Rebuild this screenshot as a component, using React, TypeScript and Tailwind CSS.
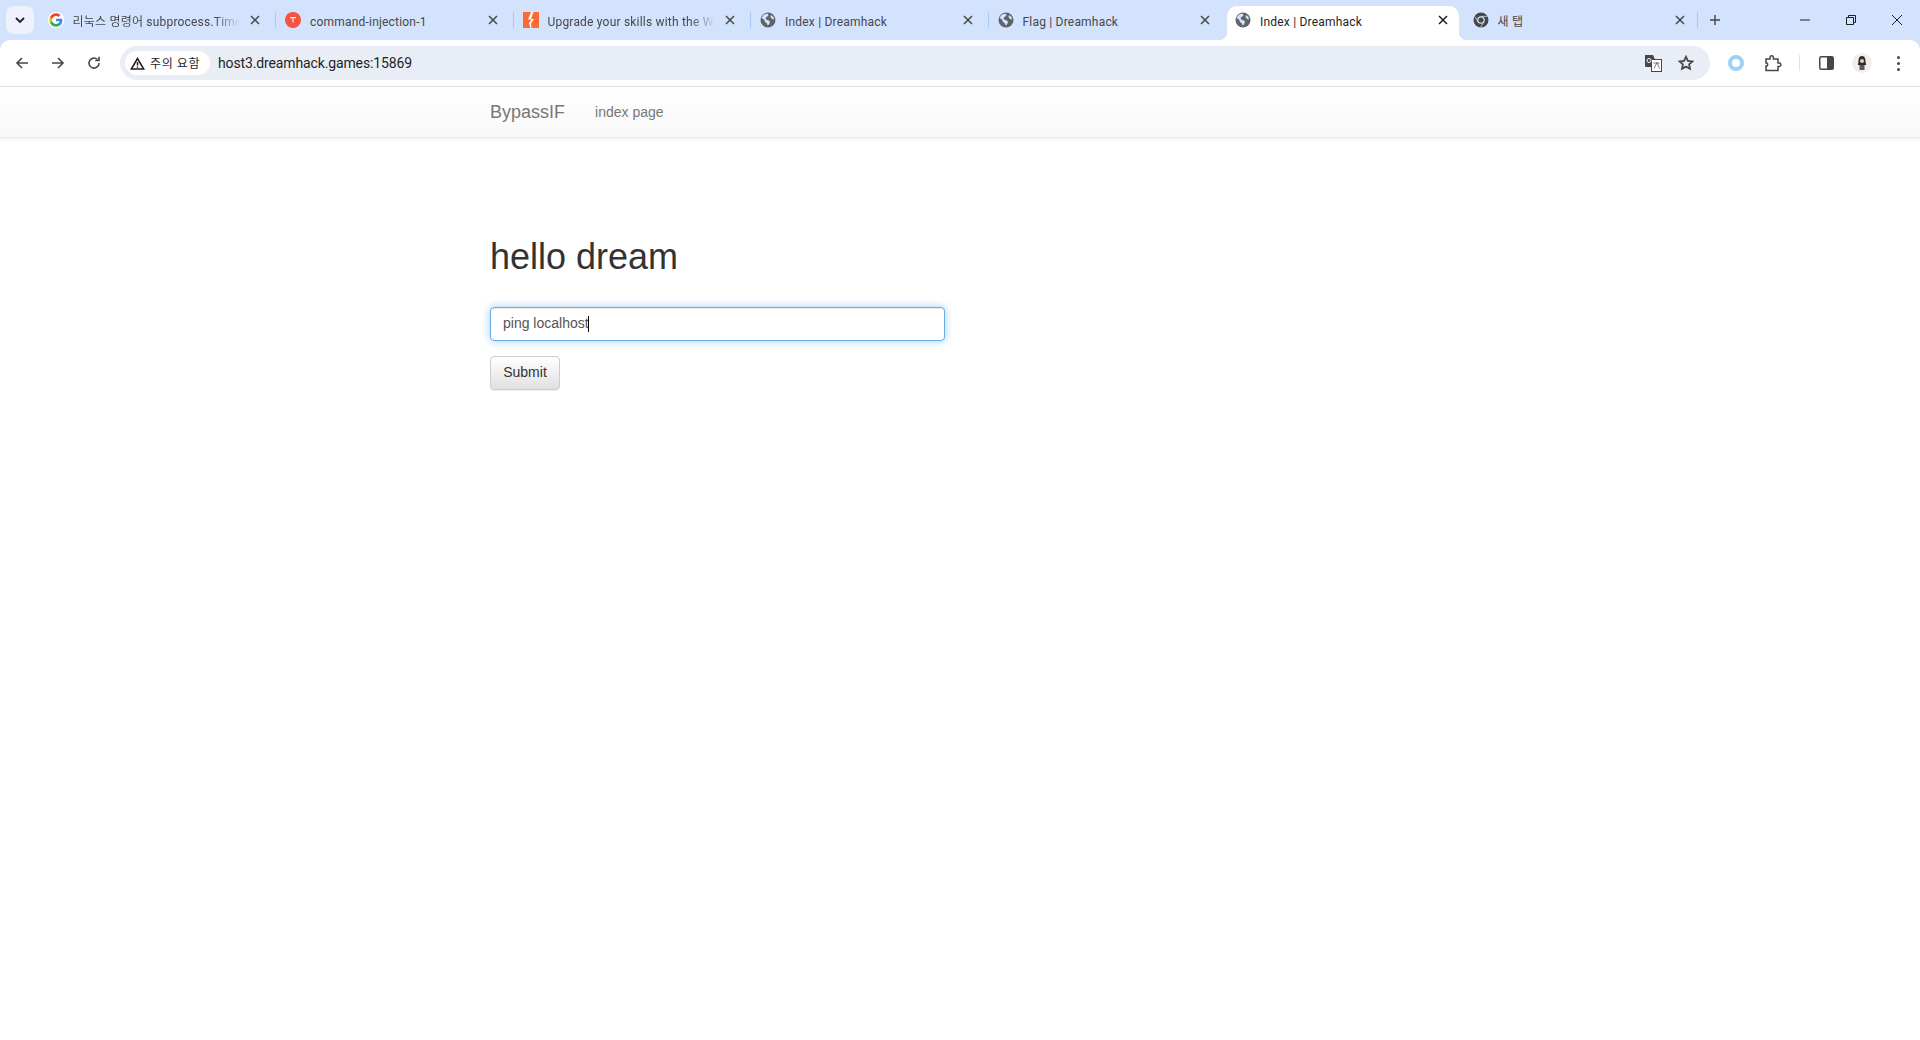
import React from "react";

function Close({ dark }: { dark?: boolean }) {
  return (
    <svg width="10" height="10" viewBox="0 0 10 10" className="shrink-0" fill="none" stroke={dark ? "#1f1f1f" : "#474747"} strokeWidth="1.5">
      <path d="M1 1l8 8M9 1l-8 8" />
    </svg>
  );
}

function Globe() {
  return (
    <svg width="16" height="16" viewBox="0 0 16 16" className="shrink-0">
      <circle cx="8" cy="8" r="7.5" fill="#5f6368" />
      <path d="M3 3.500c1.500-1.600 4-2 5-1.500l.5 1.500-2 1.500-1 1.500 1.500 1.500 2 .5 1 1.500-1 2.500-1.500 1-.5-2-2-1.500-1-2.500L1.500 6z M11 3l2.500 2 .5 2.500-2-.5-1.500-2z" fill="#d3e3fd" />
    </svg>
  );
}

function GoogleG() {
  return (
    <svg width="16" height="16" viewBox="0 0 48 48" className="shrink-0">
      <circle cx="24" cy="24" r="24" fill="#fff" />
      <path fill="#4285F4" d="M43 24.500c0-1.400-.1-2.700-.4-4H24v7.600h10.900c-.5 2.500-1.900 4.600-4 6v5h6.400C41 35.600 43 30.500 43 24.500z" />
      <path fill="#34A853" d="M24 44c5.400 0 9.900-1.800 13.300-4.900l-6.400-5c-1.800 1.200-4.100 1.900-6.900 1.900-5.200 0-9.700-3.500-11.300-8.300H6v5.100C9.300 39.500 16.100 44 24 44z" />
      <path fill="#FBBC05" d="M12.700 27.700c-.4-1.200-.6-2.500-.6-3.700s.2-2.500.6-3.700v-5.100H6C4.700 17.900 4 20.900 4 24s.7 6.100 2 8.800z" />
      <path fill="#EA4335" d="M24 11.900c2.900 0 5.600 1 7.700 3l5.700-5.700C33.900 6 29.400 4 24 4 16.100 4 9.300 8.500 6 15.200l6.700 5.100c1.600-4.900 6.100-8.400 11.300-8.400z" />
    </svg>
  );
}

function Tistory() {
  return (
    <svg width="16" height="16" viewBox="0 0 16 16" className="shrink-0">
      <circle cx="8" cy="8" r="8" fill="#f5533d" />
      <rect x="5" y="5" width="6" height="1.300" fill="#fff" opacity="0.85" />
      <rect x="7.400" y="5" width="1.200" height="5.500" fill="#fff" opacity="0.85" />
    </svg>
  );
}

function Bolt() {
  return (
    <svg width="16" height="16" viewBox="0 0 16 16" className="shrink-0">
      <rect width="16" height="16" fill="#fb6a33" />
      <path d="M8 0L5 7.500h3.500L6 11l1.500 5h1L8 11.500 11 7H8l2.500-7z" fill="#fff" />
    </svg>
  );
}

function Chrome() {
  return (
    <svg width="16" height="16" viewBox="0 0 16 16" className="shrink-0">
      <circle cx="8" cy="8" r="7.500" fill="#474747" />
      <circle cx="8" cy="8" r="3.800" fill="#d3e3fd" />
      <circle cx="8" cy="8" r="2.600" fill="#474747" />
      <path d="M8 4.400h6.500M5 10l-3-5.500M10.800 10.200l-3.500 5.500" stroke="#d3e3fd" strokeWidth="0.7" />
    </svg>
  );
}

type T = { icon: React.ReactNode; title: string; active?: boolean; fade?: boolean; sep?: "mid" | "last" };

const tabs: T[] = [
  { icon: <GoogleG />, title: "리눅스 명령어 subprocess.TimeoutExpired", fade: true, sep: "mid" },
  { icon: <Tistory />, title: "command-injection-1", sep: "mid" },
  { icon: <Bolt />, title: "Upgrade your skills with the Web Hacking", fade: true, sep: "mid" },
  { icon: <Globe />, title: "Index | Dreamhack", sep: "mid" },
  { icon: <Globe />, title: "Flag | Dreamhack" },
  { icon: <Globe />, title: "Index | Dreamhack", active: true },
  { icon: <Chrome />, title: "새 탭", sep: "last" },
];

function Tab({ t }: { t: T }) {
  return (
    <div className="relative h-[34px] w-[237.500px] shrink-0">
      <div className={`relative ml-[2.500px] flex h-[34px] w-[231.500px] items-center pb-[6px] pl-[8px] pr-[8px] ${t.active ? "rounded-t-[10px] bg-white" : ""}`}>
        {t.active && (
          <>
            <span className="absolute bottom-0 left-[-8px] h-2 w-2 bg-[radial-gradient(circle_at_0_0,transparent_8px,#ffffff_8.500px)]" />
            <span className="absolute bottom-0 right-[-8px] h-2 w-2 bg-[radial-gradient(circle_at_100%_0,transparent_8px,#ffffff_8.500px)]" />
          </>
        )}
        {t.icon}
        <span
          className={`ml-[9px] mt-[3px] min-w-0 flex-1 overflow-hidden whitespace-nowrap text-[12px] leading-[16px] tracking-[0.2px] ${t.active ? "text-[#1f1f1f]" : "text-[#474747]"} ${t.fade ? "[mask-image:linear-gradient(to_right,black_85%,transparent)]" : ""}`}
        >
          {t.title}
        </span>
        <span className="ml-[7px] flex w-4 items-center justify-center"><Close dark={t.active} /></span>
      </div>
      {t.sep === "mid" && <span className="absolute right-[-1.500px] top-[6px] h-[16px] w-px bg-[#a8c7fa]" />}
      {t.sep === "last" && <span className="absolute right-[1.500px] top-[6px] h-[16px] w-px bg-[#a8c7fa]" />}
    </div>
  );
}

const navIcon = "flex h-7 w-7 items-center justify-center";

export default function App() {
  return (
    <div className="h-[1040px] w-[1920px] overflow-hidden bg-white font-['Liberation_Sans',sans-serif]">
      {/* tab strip */}
      <div className="flex h-10 items-end bg-[#d3e3fd] font-['Roboto','Noto_Sans_CJK_KR',sans-serif]">
        <div className="mb-[6px] ml-[6px] mr-[3px] flex h-[28px] w-[28px] items-center justify-center rounded-lg bg-[#edf2fc]">
          <svg width="10" height="7" viewBox="0 0 10 7" fill="none" stroke="#1f1f1f" strokeWidth="1.800"><path d="M1 1l4 4 4-4" /></svg>
        </div>
        <div className="flex">
          {tabs.map((t, i) => <Tab key={i} t={t} />)}
        </div>
        <div className="mb-[14px] ml-[7.500px] flex w-4 items-center justify-center">
          <svg width="12" height="12" viewBox="0 0 12 12" stroke="#474747" strokeWidth="1.400"><path d="M6 1v10M1 6h10" /></svg>
        </div>
        <div className="ml-auto flex h-10 items-center">
          <div className="flex w-[46px] justify-center">
            <svg width="10" height="10" viewBox="0 0 10 10" stroke="#1f1f1f" strokeWidth="1"><path d="M0 5h10" /></svg>
          </div>
          <div className="flex w-[46px] justify-center">
            <svg width="10" height="10" viewBox="0 0 10 10" fill="none" stroke="#1f1f1f" strokeWidth="1"><path d="M.5 2.500h7v7h-7z M2.500 2.500V.5h7v7h-2" /></svg>
          </div>
          <div className="flex w-[46px] justify-center">
            <svg width="10" height="10" viewBox="0 0 10 10" fill="none" stroke="#1f1f1f" strokeWidth="1"><path d="M0 0l10 10M10 0L0 10" /></svg>
          </div>
        </div>
      </div>

      {/* toolbar */}
      <div className="relative h-[46px] bg-[#d3e3fd]">
        <div className="flex h-[46px] items-center rounded-t-[10px] bg-white pl-2">
          <div className="flex items-center gap-[8px]">
            <div className={navIcon}>
              <svg width="14" height="14" viewBox="0 0 14 14" fill="none" stroke="#474747" strokeWidth="1.600"><path d="M13 7H2M7 2L2 7l5 5" /></svg>
            </div>
            <div className={navIcon}>
              <svg width="14" height="14" viewBox="0 0 14 14" fill="none" stroke="#474747" strokeWidth="1.600"><path d="M1 7h11M7 2l5 5-5 5" /></svg>
            </div>
            <div className={navIcon}>
              <svg width="14" height="14" viewBox="0 0 14 14" fill="none" stroke="#474747" strokeWidth="1.600"><path d="M12 7a5 5 0 1 1-1.500-3.500" /><path d="M12 .8v3.700H8.300" /></svg>
            </div>
          </div>
          <div className="ml-[12px] flex h-[34px] w-[1590px] items-center rounded-full bg-[#e9eef6] pl-[5px] pr-[16px]">
            <div className="flex h-[24px] w-[85px] items-center gap-[5px] rounded-full bg-white pl-[5px] font-['Noto_Sans_CJK_KR',sans-serif] text-[12px] tracking-[0.7px] text-[#1f1f1f]">
              <svg width="15" height="13" viewBox="0 0 15 13" fill="none" stroke="#1f1f1f" strokeWidth="1.500" className="shrink-0"><path d="M7.500 1.500L1.300 12h12.400z" /><path d="M7.500 5v3.500M7.500 9.500v1.200" /></svg>
              <span className="whitespace-nowrap">주의 요함</span>
            </div>
            <span className="ml-[8px] font-['Roboto',sans-serif] text-[14px] tracking-[-0.13px] text-[#1f1f1f]">host3.dreamhack.games:15869</span>
            <div className="ml-auto flex items-center gap-[16px]">
              <svg width="17" height="17" viewBox="0 0 17 17">
                <path d="M0 0h8l1.500 3.500V12H1.500A1.500 1.500 0 0 1 0 10.500z" fill="#474747" />
                <rect x="6.500" y="4.500" width="10" height="12" fill="#fff" stroke="#474747" />
                <path d="M9 13.500l3-6 2.500 6M8.500 8h6" stroke="#6b6b6b" fill="none" strokeWidth="0.9" />
                <circle cx="4" cy="5.500" r="2" fill="none" stroke="#fff" />
              </svg>
              <svg width="16" height="16" viewBox="0 0 16 16" fill="none" stroke="#474747" strokeWidth="1.800"><path d="M8 1.800l1.900 4.100 4.500.5-3.300 3 .9 4.400L8 11.600l-4 2.200.9-4.400-3.300-3 4.500-.5z" /></svg>
            </div>
          </div>
          <div className="ml-[11px] flex w-[30px] justify-center">
            <span className="h-4 w-4 rounded-full border-[4px] border-[#9fd0f5] bg-white" />
          </div>
          <div className="ml-[7px] flex w-[30px] justify-center">
            <svg width="17" height="17" viewBox="0 0 17 17" fill="none" stroke="#474747" strokeWidth="1.500"><path d="M1 4h4V2.500a1.700 1.700 0 0 1 3.400 0V4H13v4h1.200a1.700 1.700 0 0 1 0 3.400H13V15.500H1V11h1a2 2 0 0 0 0-3H1z" /></svg>
          </div>
          <span className="ml-[11px] h-[16px] w-px bg-[#d3e3fd]" />
          <div className="ml-[11px] flex w-[30px] justify-center">
            <svg width="15" height="14" viewBox="0 0 15 14"><rect x=".75" y=".75" width="13.500" height="12.500" rx="1.500" fill="none" stroke="#474747" strokeWidth="1.500" /><rect x="8" y="1" width="6" height="12" fill="#474747" /></svg>
          </div>
          <div className="ml-[6px] flex w-[30px] justify-center">
            <span className="flex h-5 w-5 items-center justify-center rounded-full bg-[#f3eeec]">
              <svg width="10" height="15" viewBox="0 0 10 15"><path d="M5 0c3 0 3.500 3 3.500 5.500 0 2 1 2.500.5 3.500H1C.5 8 1.500 7.500 1.500 5.500 1.500 3 2 0 5 0z" fill="#2c2c2c" /><circle cx="5" cy="5" r="2" fill="#e8cfc2" /><rect x="2.500" y="9" width="5" height="5" fill="#5a5a5a" /></svg>
            </span>
          </div>
          <div className="ml-[6px] flex w-[30px] flex-col items-center gap-[3px]">
            <span className="h-[3px] w-[3px] rounded-full bg-[#474747]" />
            <span className="h-[3px] w-[3px] rounded-full bg-[#474747]" />
            <span className="h-[3px] w-[3px] rounded-full bg-[#474747]" />
          </div>
        </div>
      </div>

      {/* page */}
      <div className="border-t border-[#e3e3e3]">
        <nav className="h-[51px] border-b border-[#e7e7e7] bg-[linear-gradient(to_bottom,#ffffff_0%,#f8f8f8_100%)] shadow-[0_1px_5px_rgba(0,0,0,0.075)]">
          <div className="flex h-[50px] items-center pl-[490px] text-[#777777]">
            <span className="text-[18px]">BypassIF</span>
            <span className="ml-[30px] text-[14px]">index page</span>
          </div>
        </nav>
        <main className="pl-[490px] pt-[99px] text-[#333333]">
          <h1 className="text-[36px] leading-[40px]">hello dream</h1>
          <div className="mt-[30px] flex h-[34px] w-[455px] items-center rounded-[4px] border border-[#66afe9] bg-white px-3 pb-[1px] text-[14px] text-[#555555] shadow-[inset_0_1px_1px_rgba(0,0,0,0.075),0_0_8px_rgba(102,175,233,0.6)]">
            <span>ping localhost</span>
            <span className="ml-[-1px] h-[16px] w-px bg-black" />
          </div>
          <button className="mt-[15px] flex h-[34px] w-[70px] items-center justify-center rounded-[4px] border border-[#cccccc] bg-[linear-gradient(to_bottom,#ffffff_0%,#e0e0e0_100%)] pb-[1px] text-[14px] text-[#333333] shadow-[inset_0_1px_0_rgba(255,255,255,0.15),0_1px_1px_rgba(0,0,0,0.075)]">
            Submit
          </button>
        </main>
      </div>
    </div>
  );
}
